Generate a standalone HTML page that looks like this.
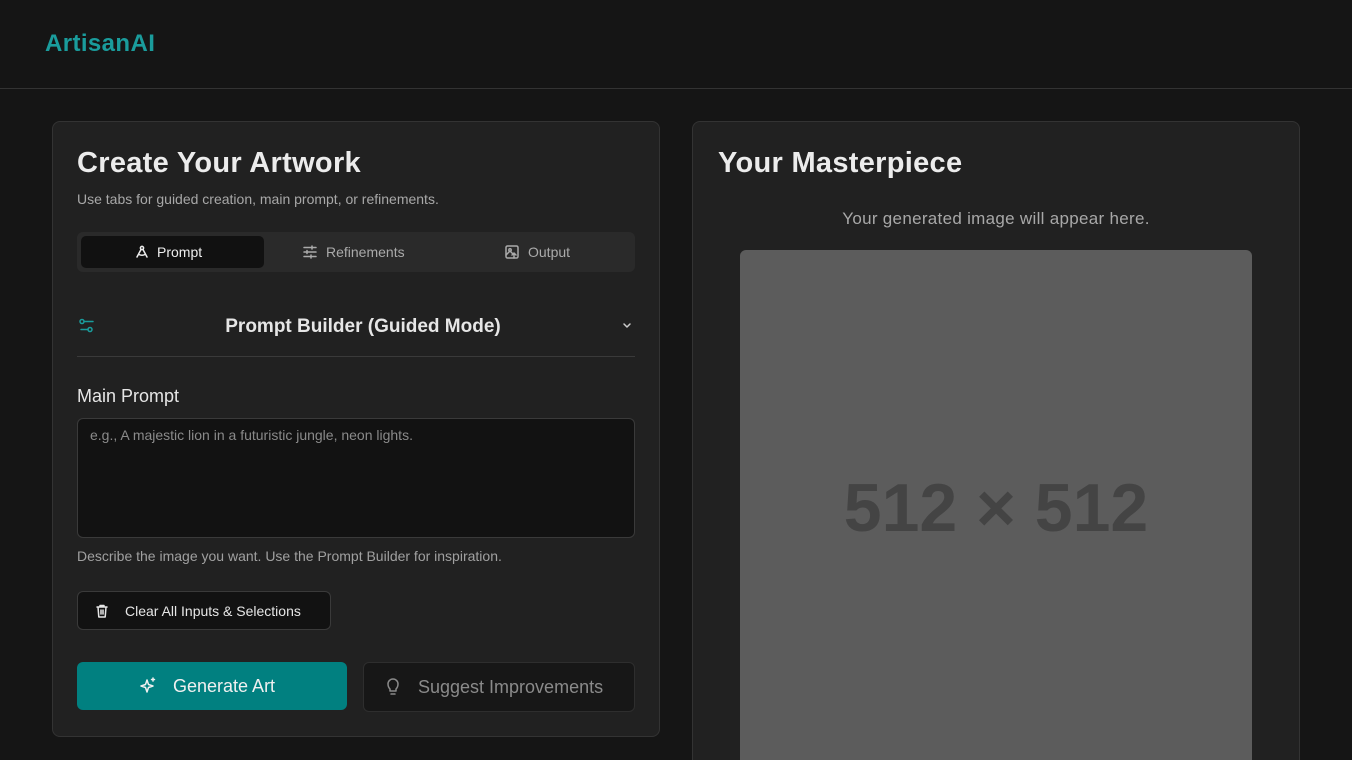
<!DOCTYPE html>
<html style="height:760px;overflow:hidden"><head><style>
*{box-sizing:border-box;margin:0;padding:0}
body{width:1352px;height:760px;overflow:hidden;background:#151515;font-family:"Liberation Sans",sans-serif;color:#e8e8e8;position:relative}
.hdr{height:89px;border-bottom:1px solid #333;position:relative}
.logo{position:absolute;left:45px;top:30px;font-size:24px;font-weight:bold;color:#1a9c9c;letter-spacing:0.4px}
.card{position:absolute;top:121px;background:#212121;border:1px solid #333;border-radius:8px}
.a{position:absolute}
.icon{stroke:currentColor;fill:none;stroke-width:1.5;stroke-linecap:round;stroke-linejoin:round}
</style></head><body>
<div class="hdr"><div class="logo">ArtisanAI</div></div>
<div class="card" style="left:52px;width:608px;height:616px">
 <div class="a" style="left:24px;top:25px;font-size:29px;font-weight:bold;color:#ececec;letter-spacing:0.3px">Create Your Artwork</div>
 <div class="a" style="left:24px;top:69px;font-size:14px;color:#a8a8a8">Use tabs for guided creation, main prompt, or refinements.</div>
 <div class="a" style="left:24px;top:110px;width:558px;height:40px;background:#2a2a2a;border-radius:6px">
  <div class="a" style="left:4px;top:4px;width:183px;height:32px;background:#111;border-radius:5px"></div>
  <div class="a" style="left:58px;top:12px;font-size:14px;color:#eee"><svg class="icon" width="14" height="14" viewBox="0 0 14 14" style="vertical-align:-2px;margin-right:8px"><circle cx="7" cy="3" r="1.6"/><path d="M6 4.5L2 12M8 4.5L12 12M4 9.5q3 1.5 6 0"/></svg>Prompt</div>
  <div class="a" style="left:226px;top:12px;font-size:14px;color:#aaa"><svg class="icon" width="14" height="14" viewBox="0 0 14 14" style="vertical-align:-2px;margin-right:9px"><path d="M1 2.5h12M1 7h12M1 11.5h12M9 1v3M4 5.5v3M8 10v3"/></svg>Refinements</div>
  <div class="a" style="left:428px;top:12px;font-size:14px;color:#aaa"><svg class="icon" width="14" height="14" viewBox="0 0 14 14" style="vertical-align:-2px;margin-right:9px"><rect x="1" y="1" width="12" height="12" rx="1.5"/><circle cx="5" cy="5" r="1.2"/><path d="M1 10l4-4 3 3M9 13v-4M7 10l2-2 2 2"/></svg>Output</div>
 </div>
 <svg class="a icon" style="left:26px;top:196px;color:#1a9c9c" width="16" height="16" viewBox="0 0 16 16"><circle cx="3" cy="3.5" r="2"/><circle cx="11" cy="11.5" r="2"/><path d="M5 3.5h9M2 11.5h7"/></svg>
 <div class="a" style="left:0;width:620px;top:194px;text-align:center;font-size:19px;font-weight:bold;color:#e6e6e6">Prompt Builder (Guided Mode)</div>
 <svg class="a icon" style="left:568px;top:200px;color:#ccc" width="12" height="8" viewBox="0 0 12 8"><path d="M3 2l3 3 3-3"/></svg>
 <div class="a" style="left:24px;top:234px;width:558px;height:1px;background:#3a3a3a"></div>
 <div class="a" style="left:24px;top:264px;font-size:18px;color:#e6e6e6">Main Prompt</div>
 <div class="a" style="left:24px;top:296px;width:558px;height:120px;background:#121212;border:1px solid #3a3a3a;border-radius:6px;padding:8px 12px;font-size:14px;color:#8a8a8a">e.g., A majestic lion in a futuristic jungle, neon lights.</div>
 <div class="a" style="left:24px;top:426px;font-size:14px;color:#a0a0a0">Describe the image you want. Use the Prompt Builder for inspiration.</div>
 <div class="a" style="left:24px;top:469px;width:254px;height:39px;background:#121212;border:1px solid #3a3a3a;border-radius:6px;font-size:14px;color:#e6e6e6;padding:11px 0 0 17px"><svg class="icon" width="14" height="14" viewBox="0 0 14 14" style="vertical-align:-2px;margin-right:16px"><path d="M2 3h10M5 3V1.5h4V3M3 3l.8 10h6.4L11 3M6 6v4M8 6v4"/></svg>Clear All Inputs &amp; Selections</div>
 <div class="a" style="left:24px;top:540px;width:270px;height:48px;background:#018080;border-radius:6px;font-size:18px;color:#f0f0f0;padding:14px 0 0 62px"><svg class="icon" width="18" height="18" viewBox="0 0 18 18" style="vertical-align:-3px;margin-right:16px"><path d="M8 3l1.5 4.5L14 9l-4.5 1.5L8 15l-1.5-4.5L2 9l4.5-1.5z"/><path d="M14 1v3M12.5 2.5h3"/></svg>Generate Art</div>
 <div class="a" style="left:310px;top:540px;width:272px;height:50px;background:#171717;border:1px solid #2e2e2e;border-radius:6px;font-size:18px;color:#8a8a8a;padding:14px 0 0 22px"><svg class="icon" width="14" height="18" viewBox="0 0 14 18" style="vertical-align:-3px;margin-right:18px"><path d="M4 11q-2-2-2-5a5 5 0 0110 0q0 3-2 5v2H4zM5 16h4"/></svg>Suggest Improvements</div>
</div>
<div class="card" style="left:692px;width:608px;height:639px;border-bottom:none;border-radius:8px 8px 0 0">
 <div class="a" style="left:25px;top:25px;font-size:29px;font-weight:bold;color:#ececec;letter-spacing:0.3px">Your Masterpiece</div>
 <div class="a" style="left:0;width:606px;top:87px;text-align:center;font-size:17px;color:#a8a8a8;letter-spacing:0.3px">Your generated image will appear here.</div>
 <div class="a" style="left:47px;top:128px;width:512px;height:520px;background:#5c5c5c;border-radius:6px"></div>
 <div class="a" style="left:47px;width:512px;top:347px;text-align:center;font-size:68px;font-weight:bold;color:#444">512 × 512</div>
</div>
</body></html>
